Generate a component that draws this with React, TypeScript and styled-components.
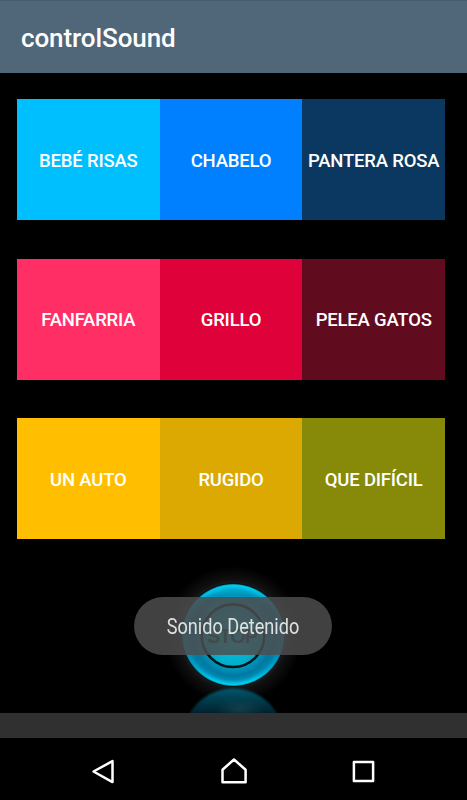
import React from "react";
import styled, { createGlobalStyle } from "styled-components";

const GlobalStyle = createGlobalStyle`
  * { box-sizing: border-box; }
  html, body { margin: 0; padding: 0; background: #000; }
  body { font-family: Roboto, "Liberation Sans", sans-serif; overflow: hidden; }
`;

const Screen = styled.div`
  display: flex;
  flex-direction: column;
  width: 467px;
  height: 800px;
  background: #000;
  overflow: hidden;
`;

const AppBar = styled.header`
  display: flex;
  align-items: center;
  flex: none;
  height: 73px;
  padding: 2px 21px 0;
  background: #50677a;
  border-top: 1px solid #465b6c;
`;

const Title = styled.h1`
  margin: 0;
  color: #fff;
  font-size: 26px;
  line-height: 32px;
  font-weight: 500;
  letter-spacing: -0.1px;
  white-space: nowrap;
`;

const Content = styled.main`
  display: flex;
  flex-direction: column;
  flex: none;
  height: 640px;
  padding-top: 26px;
`;

const Board = styled.div`
  display: grid;
  grid-template-rows: repeat(3, 121px);
  row-gap: 38.6px;
  flex: none;
  margin: 0 22px 0 17px;
`;

const Row = styled.div`
  display: grid;
  grid-template-columns: repeat(3, 1fr);
`;

const SoundButton = styled.button<{ $color: string }>`
  display: flex;
  align-items: center;
  justify-content: center;
  min-width: 0;
  padding: 2px 0 0;
  border: 0;
  background: ${(p) => p.$color};
  color: #fff;
  font: 500 18.5px Roboto, "Liberation Sans", sans-serif;
  letter-spacing: -0.2px;
  white-space: nowrap;
`;

const StopArea = styled.div`
  position: relative;
  flex: 1;
  min-height: 0;
  overflow: hidden;
`;

const StopArt = styled.svg`
  display: block;
  width: 467px;
  height: 174px;
`;

const Toast = styled.div`
  position: absolute;
  top: 58.3px;
  left: 134px;
  display: flex;
  align-items: center;
  justify-content: center;
  width: 198px;
  height: 57.3px;
  padding-top: 2px;
  border-radius: 29px;
  background: rgba(78, 78, 78, 0.84);
`;

const ToastText = styled.span`
  color: #dde1e2;
  font-size: 21.6px;
  line-height: 28px;
  white-space: nowrap;
  transform: scaleX(0.84);
`;

const Footer = styled.div`
  flex: none;
  height: 25px;
  background: #303030;
`;

const NavBar = styled.nav`
  display: grid;
  grid-template-columns: repeat(3, 130px);
  justify-content: center;
  align-items: center;
  flex: 1;
  padding-top: 3px;
`;

const NavButton = styled.button`
  display: flex;
  justify-content: center;
  padding: 0;
  border: 0;
  background: none;
`;

const NavIcon = styled.svg`
  display: block;
  width: 40px;
  height: 40px;
  fill: none;
  stroke: #fff;
  stroke-width: 2.5;
  stroke-linejoin: round;
`;

const rows = [
  [
    { label: "BEBÉ RISAS", color: "#00bfff" },
    { label: "CHABELO", color: "#0080ff" },
    { label: "PANTERA ROSA", color: "#0b3860" },
  ],
  [
    { label: "FANFARRIA", color: "#ff2e64" },
    { label: "GRILLO", color: "#df013a" },
    { label: "PELEA GATOS", color: "#610b1e" },
  ],
  [
    { label: "UN AUTO", color: "#ffbf00" },
    { label: "RUGIDO", color: "#dba901" },
    { label: "QUE DIFÍCIL", color: "#868a08" },
  ],
];

const navIcons = [
  { name: "Atrás", path: "M9.5 20.5 L28.5 10.1 V31.1 Z" },
  { name: "Inicio", path: "M20 8.5 L31.6 18.7 V31.3 H8.5 V18.7 Z" },
  { name: "Recientes", path: "M9.9 11.1 H29.1 V29.9 H9.9 Z" },
];

function StopButton() {
  return (
    <StopArt viewBox="0 539 467 174">
      <defs>
        <radialGradient id="halo">
          <stop offset="0.68" stopColor="#2a2a2a" />
          <stop offset="0.8" stopColor="#101010" />
          <stop offset="1" stopColor="#000" />
        </radialGradient>
        <radialGradient id="disc">
          <stop offset="0" stopColor="#08abc4" />
          <stop offset="0.6" stopColor="#00a0c3" />
          <stop offset="0.8" stopColor="#0079a3" />
          <stop offset="0.88" stopColor="#0089b2" />
          <stop offset="0.97" stopColor="#00d2f2" />
          <stop offset="1" stopColor="#007f9b" />
        </radialGradient>
        <linearGradient id="sides">
          <stop offset="0" stopColor="#006f98" stopOpacity="0.8" />
          <stop offset="0.3" stopColor="#007faa" stopOpacity="0" />
          <stop offset="0.7" stopColor="#007faa" stopOpacity="0" />
          <stop offset="1" stopColor="#006f98" stopOpacity="0.8" />
        </linearGradient>
        <linearGradient id="crown" x1="0" y1="0" x2="0" y2="1">
          <stop offset="0" stopColor="#00c8ec" />
          <stop offset="0.28" stopColor="#00a4c8" stopOpacity="0" />
        </linearGradient>
        <radialGradient id="center" cx="0.5" cy="0.65" r="0.6">
          <stop offset="0" stopColor="#00c4df" />
          <stop offset="1" stopColor="#0799b8" />
        </radialGradient>
        <linearGradient id="mirror" x1="0" y1="688" x2="0" y2="714" gradientUnits="userSpaceOnUse">
          <stop offset="0" stopColor="#075a70" />
          <stop offset="0.35" stopColor="#054255" />
          <stop offset="1" stopColor="#02202b" />
        </linearGradient>
        <radialGradient id="mirrorGlow">
          <stop offset="0" stopColor="#28505c" stopOpacity="0.5" />
          <stop offset="1" stopColor="#28505c" stopOpacity="0" />
        </radialGradient>
        <filter id="soft" x="-10%" y="-10%" width="120%" height="120%">
          <feGaussianBlur stdDeviation="1.2" />
        </filter>
      </defs>
      <circle cx="233.3" cy="635" r="69" fill="url(#halo)" />
      <circle cx="233.3" cy="739.5" r="51" fill="url(#mirror)" filter="url(#soft)" />
      <ellipse cx="240" cy="709" rx="24" ry="11" fill="url(#mirrorGlow)" />
      <circle cx="233.3" cy="635" r="52" fill="#00141b" />
      <circle cx="233.3" cy="635" r="51" fill="url(#disc)" />
      <circle cx="233.3" cy="635" r="51" fill="url(#sides)" />
      <circle cx="233.3" cy="635" r="50" fill="url(#crown)" opacity="0.6" />
      <circle cx="233" cy="635.7" r="31.3" fill="url(#center)" stroke="#00151a" strokeWidth="2.6" />
      <text
        x="232.5"
        y="643.2"
        textAnchor="middle"
        fontFamily="Liberation Sans, sans-serif"
        fontSize="20"
        fontWeight="700"
        textLength="51"
        fill="#083c46"
      >
        STOP
      </text>
    </StopArt>
  );
}

export default function App() {
  return (
    <Screen>
      <GlobalStyle />
      <AppBar>
        <Title>controlSound</Title>
      </AppBar>
      <Content>
        <Board>
          {rows.map((row) => (
            <Row key={row[0].label}>
              {row.map((sound) => (
                <SoundButton key={sound.label} $color={sound.color}>
                  {sound.label}
                </SoundButton>
              ))}
            </Row>
          ))}
        </Board>
        <StopArea>
          <StopButton />
          <Toast role="status">
            <ToastText>Sonido Detenido</ToastText>
          </Toast>
        </StopArea>
      </Content>
      <Footer />
      <NavBar>
        {navIcons.map((icon) => (
          <NavButton key={icon.name} aria-label={icon.name}>
            <NavIcon viewBox="0 0 40 40">
              <path d={icon.path} />
            </NavIcon>
          </NavButton>
        ))}
      </NavBar>
    </Screen>
  );
}
